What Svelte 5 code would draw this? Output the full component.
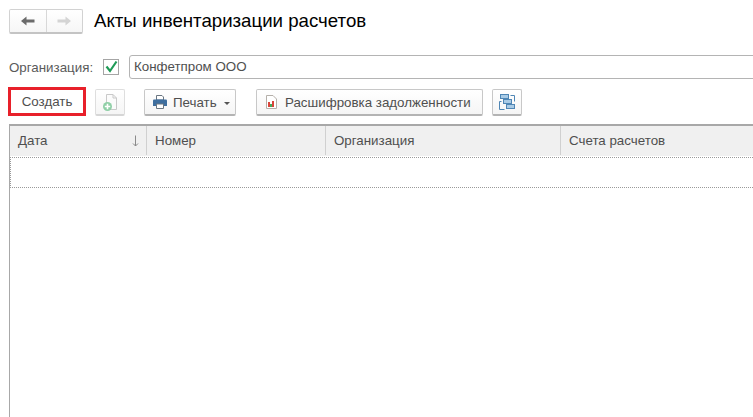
<script>
  const columns = [
    { name: 'Дата', width: 137, sort: true },
    { name: 'Номер', width: 179 },
    { name: 'Организация', width: 235 },
    { name: 'Счета расчетов', width: 200 }
  ];
</script>

<div class="page">
  <header class="head">
    <div class="nav">
      <button class="nav-btn" aria-label="Назад">
        <svg width="16" height="12" viewBox="0 0 16 12"><path d="M1 6 6.500 1.500V4.500H14.500V7.500H6.500V10.500Z" fill="#6b6b6b"/></svg>
      </button>
      <button class="nav-btn" aria-label="Вперед">
        <svg width="16" height="12" viewBox="0 0 16 12"><path d="M15 6 9.500 1.500V4.500H1.500V7.500H9.500V10.500Z" fill="#d4d4d4"/></svg>
      </button>
    </div>
    <h1>Акты инвентаризации расчетов</h1>
  </header>

  <div class="filter">
    <span class="label">Организация:</span>
    <span class="check">
      <svg width="14" height="14" viewBox="0 0 14 14"><path d="M2.500 6.500 6 11 12.500 1.500" fill="none" stroke="#1f9b57" stroke-width="2.200"/></svg>
    </span>
    <div class="input">Конфетпром ООО</div>
  </div>

  <div class="toolbar">
    <div class="highlight"><button class="btn create">Создать</button></div>
    <button class="btn square add" aria-label="Добавить">
      <svg width="18" height="20" viewBox="0 0 18 20">
        <path d="M5.500 2.500H12L15.500 6V17.500H5.500Z" fill="#fbfbfb" stroke="#c9c9c9"/>
        <path d="M12 2.500V6H15.500" fill="none" stroke="#c9c9c9"/>
        <circle cx="6.500" cy="14.500" r="4.500" fill="#8fcfa6"/>
        <path d="M6.500 11.800V17.200M3.800 14.500H9.200" stroke="#fff" stroke-width="1.600"/>
      </svg>
    </button>
    <button class="btn print">
      <svg width="16" height="16" viewBox="0 0 16 16">
        <path d="M4.500 1.500H10L11.500 3V6H4.500Z" fill="#fff" stroke="#6a7681"/>
        <path d="M1 6.500Q1 5.500 2 5.500H14Q15 5.500 15 6.500V12H1Z" fill="#3f6f9f"/>
        <path d="M4.500 10H11.500V14.500H4.500Z" fill="#fff" stroke="#6a7681"/>
      </svg>
      <span>Печать</span>
      <i class="caret"></i>
    </button>
    <button class="btn report">
      <svg width="14" height="16" viewBox="0 0 14 16">
        <path d="M1.500 1.500H8L11.500 5V14.500H1.500Z" fill="#fff" stroke="#b5b0aa"/>
        <rect x="3" y="8" width="2" height="5" fill="#d9453a"/>
        <rect x="5" y="10" width="2" height="3" fill="#43a95c"/>
        <rect x="7" y="7" width="2" height="6" fill="#d9453a"/>
      </svg>
      <span>Расшифровка задолженности</span>
    </button>
    <button class="btn square struct" aria-label="Структура">
      <svg width="18" height="18" viewBox="0 0 18 18">
        <g fill="#a9cbe6" stroke="#4f86b5">
          <rect x="2.500" y="1.500" width="8" height="4"/>
          <rect x="5.500" y="6.500" width="8" height="4"/>
          <rect x="8.500" y="11.500" width="8" height="4"/>
        </g>
        <path d="M3.500 8.500H1.500V16.500H6.500M12.500 2.500H16.500V8.500" fill="none" stroke="#4f86b5"/>
      </svg>
    </button>
  </div>

  <div class="table">
    <div class="thead">
      {#each columns as c}
        <div class="th" style="width:{c.width}px">
          <span>{c.name}</span>
          {#if c.sort}
            <svg class="sort" width="7" height="12" viewBox="0 0 7 12"><path d="M3.500 0.500V11M1 8.500 3.500 11 6 8.500" fill="none" stroke="#8a8a8a"/></svg>
          {/if}
        </div>
      {/each}
    </div>
    <div class="row"></div>
  </div>
</div>

<style>
  :global(body) {
    margin: 0;
    background: #fff;
    overflow: hidden;
  }
  .page {
    width: 753px;
    height: 417px;
    overflow: hidden;
    font-family: "Liberation Sans", Arial, sans-serif;
    font-size: 13.33px;
    color: #4f4f4f;
    box-sizing: border-box;
    padding: 9px 0 0 9px;
    display: flex;
    flex-direction: column;
  }
  button {
    font: inherit;
    color: inherit;
    margin: 0;
    padding: 0;
    cursor: pointer;
  }
  .head {
    display: flex;
    align-items: center;
    height: 25px;
    gap: 11px;
  }
  .nav {
    display: flex;
    width: 74px;
    height: 25px;
    box-sizing: border-box;
    border: 1px solid #d2d2d2;
    border-bottom: 2px solid #c4c4c4;
    border-radius: 2px;
    background: linear-gradient(#fff, #f6f6f6);
  }
  .nav-btn {
    flex: 1;
    border: 0;
    background: none;
    display: flex;
    align-items: center;
    justify-content: center;
  }
  .nav-btn + .nav-btn {
    border-left: 1px solid #d8d8d8;
  }
  h1 {
    margin: 0 0 3px;
    font-size: 18.67px;
    font-weight: 400;
    color: #000;
    line-height: 25px;
    white-space: nowrap;
  }
  .filter {
    display: flex;
    align-items: center;
    height: 24px;
    margin-top: 21px;
  }
  .label {
    width: 94px;
    flex: none;
    color: #5a5a5a;
  }
  .check {
    width: 16px;
    height: 16px;
    flex: none;
    box-sizing: border-box;
    border: 1px solid #a5a5a5;
    display: flex;
    align-items: center;
    justify-content: center;
  }
  .input {
    margin-left: 10px;
    flex: none;
    width: 640px;
    height: 24px;
    box-sizing: border-box;
    border: 1px solid #b4b4b4;
    border-radius: 3px;
    padding-left: 4px;
    line-height: 22px;
  }
  .toolbar {
    display: flex;
    align-items: flex-start;
    margin-top: 8px;
    margin-left: -1px;
    height: 29px;
  }
  .highlight {
    width: 78px;
    height: 29px;
    box-sizing: border-box;
    border: 3px solid #e8202a;
    flex: none;
  }
  .btn {
    height: 27px;
    box-sizing: border-box;
    margin-top: 2px;
    border: 1px solid #c8c8c8;
    border-bottom: 2px solid #b4b4b4;
    border-radius: 2px;
    background: linear-gradient(#fff, #f5f5f5);
    display: flex;
    align-items: center;
    flex: none;
  }
  .create {
    width: 100%;
    height: 100%;
    margin: 0;
    border: 0;
    background: #fff;
    justify-content: center;
  }
  .square {
    width: 30px;
    justify-content: center;
  }
  .add {
    margin-left: 9px;
    border-color: #dedede;
    border-bottom: 2px solid #d6d6d6;
  }
  .print {
    margin-left: 19px;
    width: 92px;
    padding-left: 7px;
    gap: 5px;
  }
  .caret {
    width: 0;
    height: 0;
    margin-left: 2px;
    margin-top: 2px;
    border: 3px solid transparent;
    border-top-color: #555;
    border-bottom: 0;
  }
  .report {
    margin-left: 20px;
    width: 227px;
    padding-left: 8px;
    gap: 6px;
    white-space: nowrap;
  }
  .struct {
    margin-left: 9px;
  }
  .table {
    margin-top: 8px;
    flex: 1;
    width: 760px;
    box-sizing: border-box;
    border-top: 2px solid #a8a8a8;
    border-left: 1px solid #a8a8a8;
  }
  .thead {
    display: flex;
    height: 29px;
    padding-bottom: 1px;
    box-sizing: content-box;
    background: #f0f0f0;
  }
  .th {
    flex: none;
    box-sizing: border-box;
    border-right: 1px solid #d0d0d0;
    padding-left: 8px;
    padding-right: 7px;
    display: flex;
    align-items: center;
    justify-content: space-between;
  }
  .sort {
    margin-top: 1px;
  }
  .row {
    height: 29px;
    margin-top: 1px;
    border-top: 1px dotted #9a9a9a;
    border-bottom: 1px dotted #9a9a9a;
    border-left: 1px dotted #9a9a9a;
  }
</style>
